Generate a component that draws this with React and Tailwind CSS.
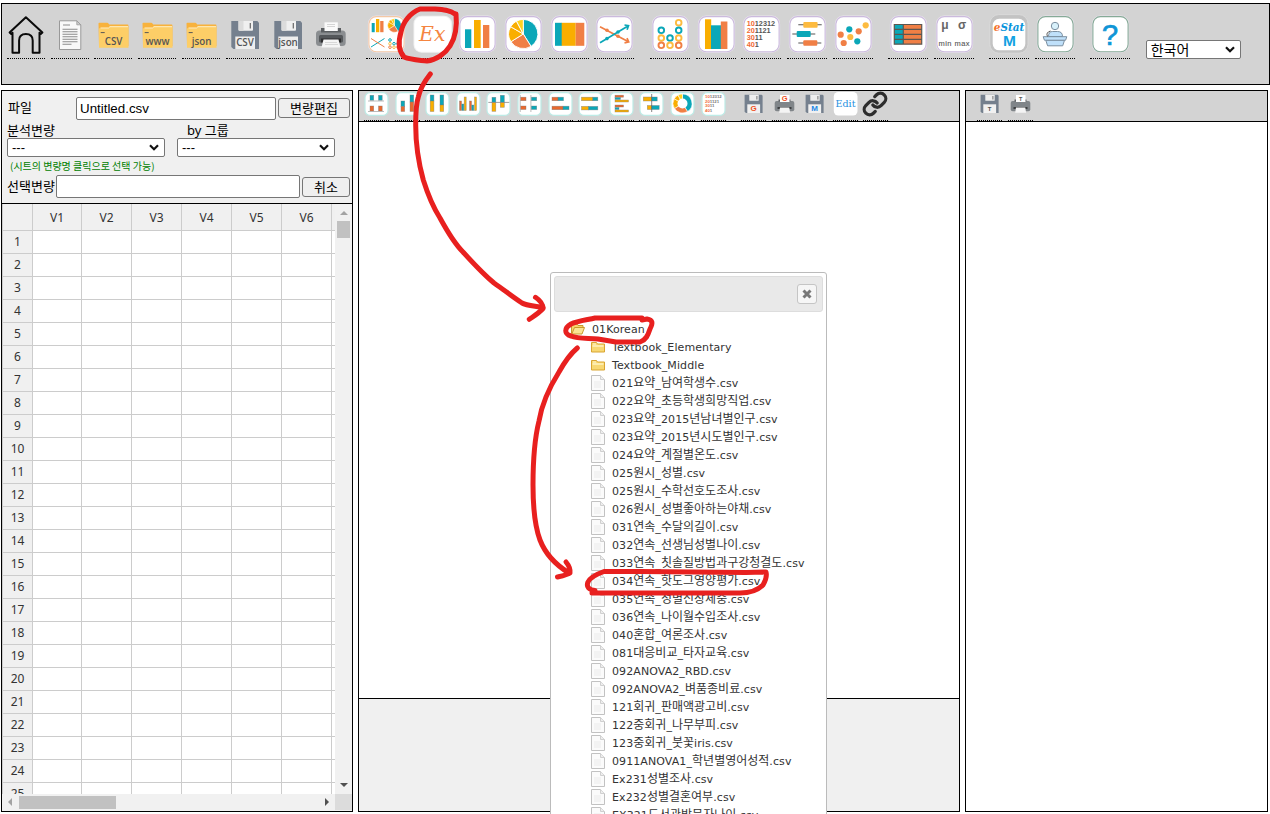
import React from 'react';
import { Link } from 'lucide-react';

const T = '#0ba7b8';
const Y = '#f9ae00';
const L = '#fdbb40';
const O = '#f07f45';
const SANS = 'Liberation Sans, Arial, sans-serif';
const SERIF = 'DejaVu Serif, Liberation Serif, serif';

function Big({ children, ml = 'ml-[5.7px]', w = 'w-10', vw = 40 }) {
  return (
    <button className={`${ml} ${w} h-[55px] shrink-0 border-b border-dotted border-black`}>
      <svg viewBox={`0 4 ${vw} 54`} className="block h-[54px] w-full">{children}</svg>
    </button>
  );
}

function Tile({ color = '#cbbadd', children, ml }) {
  return (
    <Big ml={ml}>
      <rect x="1.9" y="15.6" width="37.2" height="37.2" rx="8.5" fill="#ebe6ef" />
      <rect x="2.9" y="16.6" width="35.2" height="35.2" rx="7.5" fill="#fff" stroke={color} strokeWidth="1.1" />
      {children}
    </Big>
  );
}

function Small({ children, ml = 'ml-[5.6px]', tile = true }) {
  return (
    <button className={`${ml} h-[30px] w-[25px] shrink-0 border-b border-dotted border-black`}>
      <svg viewBox="0 91 25 29" className="block h-[29px] w-[25px]">
        {tile && <rect x="1" y="92.6" width="23" height="22.8" rx="5" fill="#fff" stroke="#bdebe6" strokeWidth="1.2" />}
        {children}
      </svg>
    </button>
  );
}

const Bars = ({ list }) => list.map(([x, y, w, h, c], i) => <rect key={i} x={x} y={y} width={w} height={h} fill={c} />);
const Shaded = ({ list }) => list.map(([x, y, w, h, c], i) => (
  <rect key={i} x={x} y={y} width={w} height={h} fill={c} stroke="#777" strokeOpacity=".6" strokeWidth=".6" />
));

function Pie({ cx, cy, r }) {
  const p = (a) => `${cx + r * Math.sin((a * Math.PI) / 180)} ${cy - r * Math.cos((a * Math.PI) / 180)}`;
  const slices = [[0, 148, T], [148, 238, O], [238, 300, Y], [300, 332, Y], [332, 360, '#ffd21f']];
  return slices.map(([a, b, c]) => (
    <path key={a} d={`M${cx} ${cy}L${p(a)}A${r} ${r} 0 0 1 ${p(b)}Z`} fill={c} stroke="#fff" strokeWidth={r / 16} />
  ));
}

function Folder({ label, ml = 'ml-[5.7px]' }) {
  return (
    <Big ml={ml} w="w-[38px]" vw={38}>
      <path d="M4.5 23.5q0-.8.8-.8h8q.8 0 1.2.8l.6 1h18.5q.8 0 .8.8V46H5z" fill="#f8b23c" />
      <path d="M5 28.3h9l1.5-1.6h19V47.8H5z" fill="#fdce67" />
      <path d="M6.5 28h8l1.4-1.3H34" stroke="#fff0c8" strokeWidth="1" fill="none" />
      <path d="M6.7 32.6h4" stroke="#555" strokeWidth="1" />
      <text x="19.6" y="45" textAnchor="middle" fontFamily="Open Sans, sans-serif" fontWeight="600" fontSize="9.8" fill="#555">{label}</text>
    </Big>
  );
}

function Floppy({ label }) {
  return (
    <Big w="w-[38px]" vw={38}>
      <path d="M5.3 21h26l1.7 1.7V49H7.5l-2.2-2z" fill="#75808e" />
      <path d="M12.5 21H27v8.7q0 1-1 1H13.500q-1 0-1-1z" fill="#f0f0f0" />
      <path d="M12.5 21h5v9.700h-4q-1 0-1-1z" fill="#dcdcdc" />
      <path d="M24.300 23v5.500" stroke="#666" strokeWidth="1.200" />
      <rect x="9.300" y="36.500" width="19.700" height="12.500" fill="#eee" />
      <text x="19" y="46.300" textAnchor="middle" fontFamily="Open Sans, sans-serif" fontWeight="600" fontSize="9.800" fill="#555">{label}</text>
    </Big>
  );
}

function SmallFloppy({ label, color, ml }) {
  return (
    <Small tile={false} ml={ml}>
      <path d="M3.600 94.700h17l1 1V113H5l-1.400-1.200z" fill="#75808e" />
      <rect x="8.300" y="94.700" width="9.400" height="6" rx=".5" fill="#eee" />
      <path d="M15.900 96v3.500" stroke="#666" strokeWidth=".9" />
      <rect x="6.300" y="104.300" width="12.800" height="8.700" fill="#f1f1f1" />
      <text x="12.700" y="111.300" textAnchor="middle" fontFamily={SANS} fontWeight="700" fontSize={label === 'T' ? 6 : 8} fill={color}>{label}</text>
    </Small>
  );
}

function SmallPrinter({ label, color }) {
  return (
    <Small tile={false}>
      <rect x="2.700" y="101" width="19.600" height="10.300" rx="2" fill="#808589" />
      <path d="M6.500 99.500h12v2h-12z" fill="#5c5f62" />
      <rect x="8" y="95" width="9.500" height="7" fill="#fff" />
      <path d="M5.500 107h14v2h-14z" fill="#3d3f41" />
      <path d="M8 107.500h9.300l.8 5.200H7.200z" fill="#f4f4f4" />
      <text x="12.700" y="100.800" textAnchor="middle" fontFamily={SANS} fontWeight="700" fontSize={label === 'T' ? 5.500 : 7.500} fill={color}>{label}</text>
    </Small>
  );
}

const digitRows = [['10', '12312'], ['20', '1121'], ['30', '11'], ['40', '1']];

function Chevron() {
  return (
    <svg viewBox="0 0 10 7" className="h-[7px] w-[10px]"><path d="M1 1.300l4 4 4-4" fill="none" stroke="#111" strokeWidth="2.200" /></svg>
  );
}

function Select({ children, className }) {
  return (
    <div className={`flex items-center justify-between rounded-[2px] border border-[#767676] bg-white pl-[4px] pr-[5px] ${className}`}>
      <span>{children}</span><Chevron />
    </div>
  );
}

function TopBar() {
  return (
    <header className="flex h-[82px] w-[1269px] border border-black bg-[#d3d3d3]">
      <Big ml="ml-[5px]" w="w-[38px]" vw={38}>
        <path d="M2.600 32.600 18.900 17.200 35.400 32.600 33.800 34l-1.300-1.200V52.700h-6.800V40.500q0-6.500-6.800-6.500t-6.800 6.500v12.200H5.500V32.800L4.200 34z" fill="none" stroke="#0b0b0b" strokeWidth="2" strokeLinejoin="round" />
      </Big>
      <Big ml="ml-[6px]" w="w-[38px]" vw={38}>
        <path d="M8.500 20.800h17.300l4 4v24.700H8.500z" fill="#f8f8f8" stroke="#999" strokeWidth="1" />
        <path d="M25.800 20.800v4h4z" fill="#ccc" stroke="#999" strokeWidth=".8" />
        <path d="M12 25h7M11.500 29.200h15M11.500 31.700h15M11.500 34.200h15M11.500 36.700h15M11.500 39.200h15M11.500 41.700h15M11.500 44.200h9" stroke="#8b8b8b" strokeWidth="1.100" />
      </Big>
      <Folder label="CSV" ml="ml-[5px]" />
      <Folder label="www" ml="ml-[6px]" />
      <Folder label="json" ml="ml-[6px]" />
      <Big w="hidden" />
      <Floppy label="CSV" />
      <Floppy label="json" />
      <Big w="w-[38px]" vw={38} ml="ml-[5px]">
        <rect x="4" y="30.500" width="29.700" height="15.500" rx="3.500" fill="#8a8d90" />
        <path d="M9 28h20v4.500H9z" fill="#5b5e61" />
        <rect x="12.500" y="22.300" width="13.300" height="8.700" fill="#fafafa" />
        <path d="M15 24.500h8M15 26.500h8" stroke="#ccc" strokeWidth=".8" />
        <rect x="7" y="35" width="24" height="7.500" rx="1.500" fill="#54575a" />
        <path d="M9 38.500h20v4H9z" fill="#2e2f30" />
        <path d="M11.500 39.500h15l2 8h-19z" fill="#f5f5f5" />
        <path d="M13 42.500h12M13 44.500h13" stroke="#ccc" strokeWidth=".7" />
      </Big>

      <Tile color="#f4c8a5" ml="ml-[15.500px]">
        <Bars list={[[5.7, 23, 3, 9.2, T], [10, 19, 3.300, 13.200, Y], [14.200, 21, 3.300, 11.200, O]]} />
        <Pie cx={28.500} cy={25.500} r={6.800} />
        <path d="M5 47 18.500 38.500" stroke={T} strokeWidth="1" /><path d="M5 38.500 18.500 47" stroke={O} strokeWidth="1" />
        {[[24, 40, T], [24, 43.700, L], [24, 47.200, O], [28, 43.700, T], [28, 47.200, L], [32, 43.700, T], [32, 47.200, O]].map(([x, y, c]) => <circle key={`${x}-${y}`} cx={x} cy={y} r="1.300" fill="none" stroke={c} strokeWidth="1" />)}
      </Tile>
      <Big>
        <rect x="1.500" y="15.700" width="38.500" height="37" rx="8" fill="#f2f2f2" />
        <rect x="2.500" y="16.700" width="36.500" height="35" rx="7" fill="#fff" />
        <text x="7" y="41.300" textLength="26.500" lengthAdjust="spacingAndGlyphs" fontFamily={SERIF} fontStyle="italic" fontSize="20" fill="#f58540">Ex</text>
      </Big>
      <Tile><Bars list={[[8, 29.300, 6.300, 18.700, T], [17, 20, 6.700, 28, Y], [26, 25, 6.300, 23, O]]} /></Tile>
      <Tile><Pie cx={20.300} cy={34} r={14.600} /></Tile>
      <Tile><Bars list={[[6, 22.800, 7, 23, T], [12.700, 22.800, 14, 23, Y], [26.700, 22.800, 8.600, 23, O]]} /></Tile>
      <Tile>
        <path d="M6 26.700 34 41.500M30.500 42.800l4.200-.9-1.700-3.800" fill="none" stroke={O} strokeWidth="1.700" />
        <path d="M6 42.700 34 26M30.500 25l4 .7-1.400 4" fill="none" stroke={T} strokeWidth="1.700" />
        <circle cx="13" cy="30.300" r="1.800" fill={O} /><circle cx="24" cy="36.300" r="1.800" fill={O} /><circle cx="13" cy="38.600" r="1.800" fill={T} /><circle cx="24" cy="32" r="1.800" fill={T} />
      </Tile>

      <Tile ml="ml-[15.500px]">
        {[[11.300, 30.300, T], [11.300, 38, L], [11.300, 45.300, O], [20, 38, T], [20, 45.300, L], [28.700, 22.700, L], [28.700, 30.300, T], [28.700, 38, L], [28.700, 45.300, O]].map(([x, y, c]) => <circle key={`${x}-${y}`} cx={x} cy={y} r="2.800" fill="none" stroke={c} strokeWidth="1.900" />)}
      </Tile>
      <Tile><Bars list={[[9, 19.300, 6.200, 29.700, Y], [15, 25.300, 10, 23.700, T], [24.800, 21.500, 6.600, 27.500, O]]} /></Tile>
      <Tile>
        {digitRows.map(([a, b], i) => (
          <text key={a} x="5.700" y={26.400 + i * 6.750} fontFamily={SANS} fontWeight="700" fontSize="7.300" fill="#555"><tspan fill="#f26a35">{a}</tspan>{b}</text>
        ))}
      </Tile>
      <Tile>
        <path d="M11.300 24.700h23.400M5.300 34h23M11.300 43h23" stroke="#555" strokeWidth="1.100" />
        <rect x="16.300" y="22" width="14.300" height="5.700" rx="1" fill={L} /><rect x="9.700" y="31" width="14" height="6" rx="1" fill={T} /><rect x="16.300" y="40.300" width="14" height="5.500" rx="1" fill={O} />
      </Tile>
      <Tile>
        {[[7.700, 34.700, O], [16.300, 29.300, T], [25.700, 31.300, O], [32.700, 25.300, L], [17.300, 37, L], [10.700, 43, O], [24.300, 41.300, T]].map(([x, y, c]) => <circle key={x} cx={x} cy={y} r="3.100" fill={c} />)}
      </Tile>

      <Tile ml="ml-[15.500px]">
        <rect x="6.300" y="24.500" width="9" height="19.700" fill={T} /><rect x="15.300" y="24.500" width="18.300" height="19.700" fill={O} />
        <path d="M6.300 24.500h27.400v19.700H6.300zM15.300 24.500v19.700M6.300 29.400h27.400M6.300 34.300h27.400M6.300 39.300h27.400" fill="none" stroke="#5c5650" strokeWidth="1.200" />
      </Tile>
      <Tile>
        <text x="7.300" y="29.300" fontFamily="Liberation Sans, sans-serif" fontWeight="700" fontSize="12" fill="#666">μ</text>
        <text x="24" y="29.300" fontFamily="Liberation Sans, sans-serif" fontWeight="700" fontSize="12" fill="#666">σ</text>
        <text x="4.500" y="45.600" textLength="31" fontFamily={SANS} fontSize="7.500" fill="#555" stroke="#555" strokeWidth=".1">min max</text>
      </Tile>

      <Big ml="ml-[15.500px]">
        <rect x=".8" y="14.600" width="38.200" height="38.600" rx="9" fill="#c3c3c3" stroke="#ddd" strokeWidth=".8" />
        <rect x="3.700" y="18.800" width="32.600" height="31.500" rx="6.500" fill="#fff" />
        <text x="4.800" y="30.800" textLength="30.500" lengthAdjust="spacingAndGlyphs" fontFamily={SERIF} fontStyle="italic" fontWeight="700" fontSize="10.300" fill="#0a95dc"><tspan fill="#f5702a">e</tspan>Stat</text>
        <text x="20.500" y="46" textAnchor="middle" fontFamily={SANS} fontWeight="700" fontSize="15.500" fill="#12a2e2">M</text>
      </Big>
      <Tile color="#86aa97">
        <g fill="#bfe0fa" stroke="#7b8fa0" strokeWidth="1">
          <circle cx="20" cy="26" r="3.700" fill="#d8f1fb" />
          <path d="M13.500 36.500q0-5 4-5h5q5 0 5 5z" />
          <path d="M10.800 40.300h18.700l-1.800 5.500H12.600z" />
          <path d="M8.200 36.700h23.600l-1.200 3.500H9.400z" />
          <path d="M12.500 36.500q-2-4 3-5.500" fill="none" stroke="#555" />
        </g>
      </Tile>
      <Tile color="#86aa97" ml="ml-[15.200px]">
        <text x="20" y="45" textAnchor="middle" fontFamily={SANS} fontSize="29" fill="#0f95d6" stroke="#0f95d6" strokeWidth=".7">?</text>
      </Tile>
      <Select className="ml-[15.500px] mt-[36px] h-[19px] w-[95px] font-['Noto_Sans_CJK_KR',sans-serif] text-[14px] leading-[17px]">한국어</Select>
    </header>
  );
}

const columns = ['V1', 'V2', 'V3', 'V4', 'V5', 'V6'];

function Sheet() {
  return (
    <div className="flex h-[607px] flex-col border-t border-black font-['Noto_Sans',sans-serif] text-[12px] text-[#333]">
      <div className="flex h-[590px]">
        <div className="w-[333px] overflow-hidden border-l border-[#ccc]">
          <div className="flex h-[27px] w-[400px] border-b border-[#ccc] bg-[#f0f0f0] leading-[27px]">
            <div className="w-[30px] border-r border-[#ccc]" />
            {columns.map((c) => <div key={c} className="w-[50px] border-r border-[#ccc] text-center nth-[2]:w-[49px]">{c}</div>)}
            <div className="w-[50px]" />
          </div>
          {Array.from({ length: 25 }, (_, i) => (
            <div key={i} className="flex h-[23px] w-[400px] border-b border-[#ccc] bg-white leading-[22px]">
              <div className="w-[30px] border-r border-[#ccc] bg-[#f0f0f0] text-center">{i + 1}</div>
              {columns.map((c) => <div key={c} className="w-[50px] border-r border-[#ccc] nth-[2]:w-[49px]" />)}
            </div>
          ))}
        </div>
        <div className="flex w-[17px] flex-col items-center bg-[#f1f1f1] pb-[7px] pt-[7px]">
          <div className="size-0 border-x-[4px] border-b-[4px] border-x-transparent border-b-[#a3a3a3]" />
          <div className="mt-[6px] h-[17px] w-[13px] bg-[#c1c1c1]" />
          <div className="mt-auto size-0 border-x-[4px] border-t-[4px] border-x-transparent border-t-[#505050]" />
        </div>
      </div>
      <div className="flex h-[16px] bg-[#f1f1f1]">
        <div className="flex w-[333px] items-center px-[6px]">
          <div className="size-0 border-y-[4px] border-r-[4px] border-y-transparent border-r-[#a3a3a3]" />
          <div className="ml-[7px] h-[13px] w-[97px] bg-[#c1c1c1]" />
          <div className="ml-auto size-0 border-y-[4px] border-l-[4px] border-y-transparent border-l-[#505050]" />
        </div>
        <div className="w-[17px] bg-[#dcdcdc]" />
      </div>
    </div>
  );
}

function DataPanel() {
  const btn = 'flex items-center justify-center rounded-[3px] border border-[#767676] bg-[#efefef]';
  return (
    <section className="flex h-[722px] w-[352px] flex-col overflow-hidden border border-black bg-[#f0f0f0] font-['Noto_Sans_CJK_KR',sans-serif] text-[13px] leading-[16px] text-black">
      <div className="h-[112px] shrink-0">
        <div className="flex pt-[6px]">
          <span className="ml-[6px] mt-[2px] w-[68px]">파일</span>
          <div className="h-[23px] w-[200px] rounded-[2px] border border-[#767676] bg-white pl-[3px] font-['Liberation_Sans',sans-serif] text-[13.33px] leading-[21px]">Untitled.csv</div>
          <button className={`${btn} ml-[2px] mt-px h-[20px] w-[72px]`}>변량편집</button>
        </div>
        <div className="flex h-[17px] pt-[2px]">
          <span className="ml-[5px] w-[180px]">분석변량</span><span className="font-['Noto_Sans','Noto_Sans_CJK_KR',sans-serif]">by 그룹</span>
        </div>
        <div className="flex pl-[5px] pt-[1px]">
          <Select className="h-[19px] w-[158px] font-['Liberation_Sans',sans-serif]">---</Select>
          <Select className="ml-[12px] h-[19px] w-[158px] font-['Liberation_Sans',sans-serif]">---</Select>
        </div>
        <div className="h-[18px] pl-[8px] pt-[1px] text-[10px] text-[#008000]">(시트의 변량명 클릭으로 선택 가능)</div>
        <div className="flex pl-[5px]">
          <span className="mt-[3px] w-[49px]">선택변량</span>
          <div className="h-[23px] w-[244px] rounded-[2px] border border-[#767676] bg-white" />
          <button className={`${btn} ml-[2px] mt-[2px] h-[20px] w-[48px]`}>취소</button>
        </div>
      </div>
      <Sheet />
    </section>
  );
}

const K = '#e8692f';

function ChartPanel() {
  return (
    <section className="ml-[5px] flex h-[722px] w-[602px] flex-col border border-black bg-white">
      <div className="flex h-[31px] shrink-0 border-b border-black bg-[#d3d3d3]">
        <Small ml="ml-[5px]">
          <Shaded list={[[6, 95.300, 3.700, 5, T], [14.500, 95.300, 3.700, 5, T], [6, 106, 3.700, 5, K], [14.500, 106, 3.700, 5, K]]} />
          <path d="M4 101h16M4 111.500h16" stroke="#aaa" strokeWidth=".8" />
        </Small>
        <Small><Shaded list={[[6, 101, 3.700, 5.500, T], [6, 106.500, 3.700, 5, K], [15, 95, 3.700, 7, T], [15, 102, 3.700, 9.500, K]]} /></Small>
        <Small><Shaded list={[[5.200, 95, 3.700, 6, T], [5.200, 101, 3.700, 10.500, Y], [15, 95, 3.700, 10, T], [15, 105, 3.700, 6.500, Y]]} /></Small>
        <Small><Shaded list={[[3.500, 101, 2, 9.500, K], [5.800, 104, 2, 6.500, T], [8.200, 97, 2, 13.500, Y], [13.500, 101, 2, 9.500, K], [15.800, 105, 2, 5.500, T], [18.500, 97, 2, 13.500, Y]]} /></Small>
        <Small>
          <Shaded list={[[6, 97.300, 3.800, 5, T], [6, 102.300, 3.800, 9, Y], [14.300, 95.300, 4, 7, T], [14.300, 102.300, 4, 5, Y]]} />
          <path d="M2.300 102.400h21" stroke="#888" strokeWidth=".8" />
        </Small>
        <Small>
          <Shaded list={[[3.500, 97.200, 5.500, 3.500, K], [14.200, 97.200, 5.500, 3.500, T], [3.500, 106, 5.500, 3.500, K], [14.200, 106, 5.500, 3.500, T]]} />
          <path d="M3.200 95v17M13.900 95v17" stroke="#aaa" strokeWidth=".8" />
        </Small>
        <Small><Shaded list={[[4, 97.200, 6, 3.500, K], [10, 97.200, 5.500, 3.500, T], [4, 106.200, 11, 3.500, K], [15, 106.200, 6, 3.500, T]]} /></Small>
        <Small><Shaded list={[[3.500, 97.200, 11.300, 3.500, Y], [14.800, 97.200, 5, 3.500, T], [3.500, 106.400, 7, 3.500, Y], [10.500, 106.400, 9.300, 3.500, T]]} /></Small>
        <Small><Shaded list={[[6, 95.200, 8.500, 2, K], [6, 97.500, 5.500, 2, T], [6, 100, 13.500, 2, Y], [6, 105, 8.500, 2, K], [6, 107.500, 4, 2, T], [6, 110, 13.500, 2, Y]]} /></Small>
        <Small>
          <Shaded list={[[4.300, 97, 8.400, 4, Y], [12.700, 97, 5.500, 4, T], [8.300, 105.500, 4.400, 4, Y], [12.700, 105.500, 7.500, 4, T]]} />
          <path d="M12.700 94v18" stroke="#666" strokeWidth=".8" />
        </Small>
        <Small><Pie cx={12.500} cy={103.500} r={9.500} /><circle cx="12.500" cy="103.500" r="5" fill="#fff" /></Small>
        <Small>
          {digitRows.map(([a, b], i) => (
            <text key={a} x="4" y={98 + i * 4.500} fontFamily={SANS} fontWeight="700" fontSize="4.300" fill="#777"><tspan fill="#f26a35">{a}</tspan>{b}</text>
          ))}
        </Small>
        <SmallFloppy label="G" color="#f0501e" ml="ml-[15.500px]" />
        <SmallPrinter label="G" color="#f0501e" />
        <SmallFloppy label="M" color="#1e88e5" />
        <Small tile={false}>
          <rect x=".8" y="92" width="23.700" height="23.500" rx="4.500" fill="#fff" />
          <text x="2.500" y="107" textLength="20" lengthAdjust="spacingAndGlyphs" fontFamily={SERIF} fontSize="10" fill="#1e90e0">Edit</text>
        </Small>
        <button className="ml-[5.600px] h-[30px] w-[25px] border-b border-dotted border-black">
          <Link size={26} strokeWidth={3} color="#2d2d2d" className="-ml-px -mt-[3px]" />
        </button>
      </div>
      <div className="h-[577px] shrink-0 border-b border-black" />
      <div className="flex-1 bg-[#f0f0f0]" />
    </section>
  );
}

function TablePanel() {
  return (
    <section className="ml-[5px] h-[722px] w-[303px] border border-black bg-white">
      <div className="flex h-[31px] border-b border-black bg-[#d3d3d3]">
        <SmallFloppy label="T" color="#555" ml="ml-[11px]" />
        <SmallPrinter label="T" color="#555" />
      </div>
    </section>
  );
}

const files = [
  '021요약_남여학생수.csv', '022요약_초등학생희망직업.csv', '023요약_2015년남녀별인구.csv', '023요약_2015년시도별인구.csv',
  '024요약_계절별온도.csv', '025원시_성별.csv', '025원시_수학선호도조사.csv', '026원시_성별좋아하는야채.csv',
  '031연속_수달의길이.csv', '032연속_선생님성별나이.csv', '033연속_칫솔질방법과구강청결도.csv', '034연속_핫도그영양평가.csv',
  '035연속_성별신장체중.csv', '036연속_나이월수입조사.csv', '040혼합_여론조사.csv', '081대응비교_타자교육.csv',
  '092ANOVA2_RBD.csv', '092ANOVA2_벼품종비료.csv', '121회귀_판매액광고비.csv', '122중회귀_나무부피.csv',
  '123중회귀_붓꽃iris.csv', '0911ANOVA1_학년별영어성적.csv', 'Ex231성별조사.csv', 'Ex232성별결혼여부.csv', 'EX321도서관방문자나이.csv',
];

function FileIcon() {
  return (
    <svg viewBox="0 0 14 16" className="h-4 w-[14px]">
      <path d="M.5.500h9l4 4v11H.500z" fill="#fbfbfb" stroke="#c2c2c2" />
      <path d="M9.500.500v4h4" fill="#eee" stroke="#d0d0d0" />
      <path d="M3 6h7v7H3z" fill="#f3f3f3" />
    </svg>
  );
}

function FolderIcon({ open }) {
  return (
    <svg viewBox="0 0 14 16" className="h-4 w-[14px]">
      {open ? (
        <>
          <path d="M.5 12.500V4.500h1l1-1.500h3.500l1 1.500h5v3" fill="#f5d36d" stroke="#c99a2c" />
          <path d="M3.500 6.500h10l-2.500 6.500H.800z" fill="#fbe394" stroke="#c99a2c" />
        </>
      ) : (
        <>
          <path d="M.500 13V3.500h5l1 1.500h7V13z" fill="#f8d873" stroke="#d9a532" />
          <path d="M1.500 7h11" stroke="#fff3c0" strokeWidth="1.500" />
          <path d="M2 5h3" stroke="#fff6d0" />
        </>
      )}
    </svg>
  );
}

function Node({ icon, label, indent }) {
  return (
    <li className={`flex h-[18px] items-center whitespace-nowrap ${indent ? 'pl-[37px]' : 'pl-[17px]'}`}>
      {icon}
      <span className="ml-[7px] pt-[2px] leading-[18px] tracking-[0.09px]">
        {label.split(/([가-힣]+)/).map((part, i) => (
          <span key={i} className={i % 2 ? "font-['Noto_Sans_CJK_KR',sans-serif] text-[12px] leading-[14px] tracking-normal" : ''}>{part}</span>
        ))}
      </span>
    </li>
  );
}

function FileDialog() {
  return (
    <div className="absolute left-[550px] top-[272px] h-[560px] w-[277px] rounded-[3px] border border-[#bbb] bg-white p-[3px] font-['DejaVu_Sans',sans-serif] text-[11px] text-[#333]">
      <div className="flex h-[36px] w-[269px] items-center justify-end rounded-[3px] border border-[#ddd] bg-[#e9e9e9] pr-[5px]">
        <button className="flex size-[20px] items-center justify-center rounded-[3px] border border-[#c5c5c5] bg-[#f6f6f6]">
          <svg viewBox="0 0 10 10" className="size-[10px]"><path d="M1.500 1.500l7 7M8.500 1.500l-7 7" stroke="#777" strokeWidth="3" /></svg>
        </button>
      </div>
      <ul className="pt-[8px]">
        <Node icon={<FolderIcon open />} label="01Korean" />
        <Node indent icon={<FolderIcon />} label="Textbook_Elementary" />
        <Node indent icon={<FolderIcon />} label="Textbook_Middle" />
        {files.map((f) => <Node key={f} indent icon={<FileIcon />} label={f} />)}
      </ul>
    </div>
  );
}

function Annotations() {
  return (
    <svg viewBox="0 0 1270 814" className="pointer-events-none absolute left-0 top-0 h-[814px] w-[1270px]" fill="none" stroke="#e8201f" strokeWidth="5" strokeLinecap="round" strokeLinejoin="round">
      <path d="M455 14C450 10 443 9.500 435 9H420C410 13 403 22 401 32C398 42 398 50 404 57C411 60 419 60 427 61C436 60 445 54 450 46C457 35 457 24 456 14" />
      <path d="M430.300 74C424 82 420 89 418.300 97C416 104 415.700 112 415.700 125C415.700 142 418 161 423.300 180C428 195 433 207 440 218C446 229 454 243 463 252C473 263 483 274 494 283C504 290 513 297 522 303C527 306 536 306 543 307.700" />
      <path d="M535.500 297.300C541 301 543 305 543 308.500C539 313 534 316 529.300 319.300" />
      <path d="M642 318H595C586 320 577 321 571 324C564 328 564 334 571 336C578 339 588 338 598 339L616 342H640C646 340 648 335 650 329C653 323 653 320 647 319L642 320" />
      <path d="M577.300 348C569 355 564 363 559 372C549 388 542 403 539 421C534 441 533 460 533 485C533 505 534 524 540 540C545 553 556 565 569 573" />
      <path d="M566 562C568.500 565 570.500 569 570 573C567 575 562 576 557.500 577" />
      <path d="M592 593H740C752 593 759 589 763 585C766 580 767 576 766 572L746 572.500L640 571.500H604C597 574 590 578 588 582C586 587 589 590 595 590.500" />
    </svg>
  );
}

export default function App() {
  return (
    <div className="relative h-[814px] w-[1270px] overflow-hidden bg-white pl-px pt-[3px]">
      <TopBar />
      <main className="mt-[5px] flex">
        <DataPanel />
        <ChartPanel />
        <TablePanel />
      </main>
      <FileDialog />
      <Annotations />
    </div>
  );
}
